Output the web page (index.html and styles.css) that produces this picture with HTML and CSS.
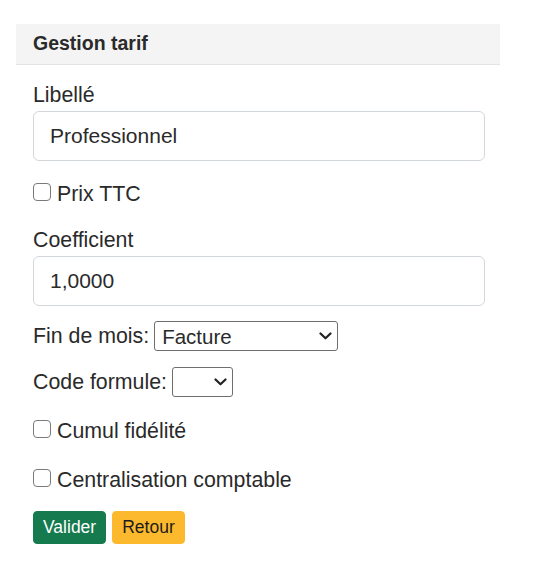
FILE: index.html
```html
<!DOCTYPE html>
<html lang="fr">
<head>
<meta charset="utf-8">
<title>Gestion tarif</title>
<link rel="stylesheet" href="styles.css">
</head>
<body>
<div class="card">
  <div class="card-header">Gestion tarif</div>
  <form class="card-body">
    <div class="group">
      <label class="label" for="libelle">Libellé</label>
      <input class="input" id="libelle" type="text" value="Professionnel">
    </div>
    <label class="check"><input class="box" type="checkbox"><span>Prix TTC</span></label>
    <div class="group">
      <label class="label" for="coef">Coefficient</label>
      <input class="input" id="coef" type="text" value="1,0000">
    </div>
    <div class="row">
      <label for="fdm">Fin de mois:</label>
      <select class="select select-wide" id="fdm"><option>Facture</option></select>
    </div>
    <div class="row">
      <label for="code">Code formule:</label>
      <select class="select select-narrow" id="code"><option></option></select>
    </div>
    <label class="check"><input class="box" type="checkbox"><span>Cumul fidélité</span></label>
    <label class="check"><input class="box" type="checkbox"><span>Centralisation comptable</span></label>
    <div class="actions">
      <button class="btn btn-success" type="button">Valider</button>
      <button class="btn btn-warning" type="button">Retour</button>
    </div>
  </form>
</div>
</body>
</html>
```
FILE: styles.css
```css
html, body {
  margin: 0;
  background: #ffffff;
}
body {
  padding: 24px 50px 0 16px;
  font-family: "Liberation Sans", Arial, Helvetica, sans-serif;
  font-size: 21.33px;
  line-height: 32px;
  color: #2a2a2a;
}
.card {
  width: 484px;
}
.card-header {
  background: #f4f4f4;
  border-bottom: 1px solid #e3e3e3;
  padding: 7px 17px 9px;
  line-height: 24px;
  font-size: 19.5px;
  font-weight: bold;
  color: #2a2a2a;
}
.card-body {
  display: flex;
  flex-direction: column;
  gap: 14px;
  padding: 14px 15px 16px 17px;
  margin: 0;
}
.group {
  display: flex;
  flex-direction: column;
}
.label {
  display: block;
}
.input {
  box-sizing: border-box;
  width: 100%;
  height: 50px;
  margin: 0;
  padding: 0 16px;
  border: 1px solid #d2d7dc;
  border-radius: 6px;
  font-family: inherit;
  font-size: 21px;
  color: #2a2a2a;
  background: #ffffff;
  outline: none;
}
.check {
  display: flex;
  align-items: flex-start;
  gap: 6px;
  margin-top: 3px;
}
.box {
  appearance: none;
  -webkit-appearance: none;
  box-sizing: border-box;
  width: 18px;
  height: 18px;
  margin: 5px 0 0 0;
  border: 1.3px solid #7a7a7a;
  border-radius: 4px;
  background: #ffffff;
  flex: none;
}
.row {
  display: flex;
  align-items: center;
  gap: 5px;
}
.select {
  appearance: none;
  -webkit-appearance: none;
  box-sizing: border-box;
  height: 29.5px;
  margin: 0;
  padding: 0 24px 0 7px;
  border: 1px solid #6e6e6e;
  border-radius: 3px;
  font-family: inherit;
  font-size: 20.5px;
  line-height: 27px;
  color: #2a2a2a;
  background-color: #ffffff;
  background-image: url("data:image/svg+xml,%3csvg xmlns='http://www.w3.org/2000/svg' viewBox='0 0 13 8'%3e%3cpath d='M1.5 1.5l5 4.8 5-4.8' fill='none' stroke='%23222' stroke-width='2.2' stroke-linecap='round' stroke-linejoin='round'/%3e%3c/svg%3e");
  background-repeat: no-repeat;
  background-size: 13px 8px;
  background-position: right 5px center;
}
.select-wide {
  width: 184px;
}
.select-narrow {
  width: 61px;
}
.actions {
  display: flex;
  gap: 6px;
  margin-top: 1px;
}
.btn {
  box-sizing: border-box;
  height: 33px;
  padding: 0 9px;
  border: 1px solid transparent;
  border-radius: 4px;
  font-family: inherit;
  font-size: 17.5px;
  line-height: 31px;
  cursor: pointer;
}
.btn-success {
  background: #157a4e;
  border-color: #157a4e;
  color: #ffffff;
}
.btn-warning {
  background: #fdb92e;
  border-color: #fdb92e;
  color: #1c1c1c;
}
```
